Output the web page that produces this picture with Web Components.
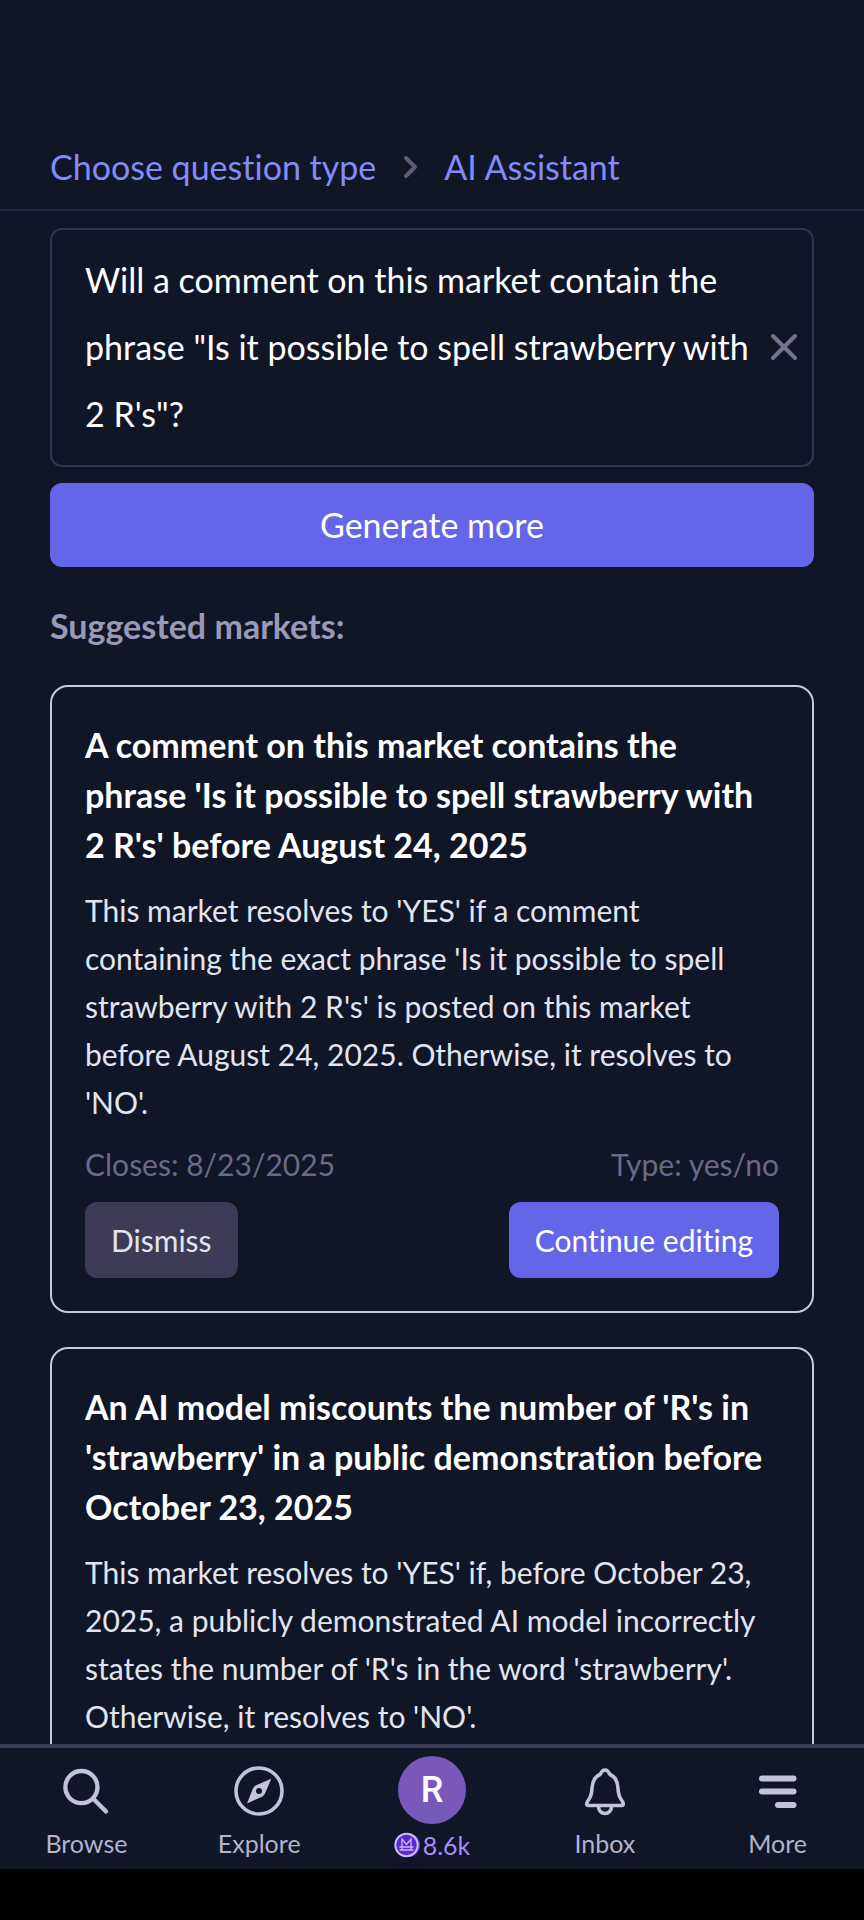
<!DOCTYPE html>
<html lang="en">
<head>
<meta charset="utf-8">
<meta name="viewport" content="width=device-width, initial-scale=1">
<title>AI Assistant</title>
<style>
  html, body { margin: 0; height: 100%; background: #000; }
  body { font-family: Lato, "Open Sans", sans-serif; font-variant-ligatures: none; color: #fff; }
</style>
</head>
<body>
<assistant-app>
  <bread-crumbs slot="header"></bread-crumbs>
  <prompt-form>Will a comment on this market contain the phrase "Is it possible to spell strawberry with 2 R's"?</prompt-form>
  <market-list heading="Suggested markets:">
    <market-card closes="8/23/2025" type="yes/no">
      <span slot="title">A comment on this market contains the phrase 'Is it possible to spell strawberry with 2&nbsp;R's' before August 24, 2025</span>
      This market resolves to 'YES' if a comment containing the exact phrase 'Is it possible to spell strawberry with 2 R's' is posted on this market before August 24, 2025. Otherwise, it resolves to 'NO'.
    </market-card>
    <market-card>
      <span slot="title">An AI model miscounts the number of 'R's in 'strawberry' in a public demonstration before October 23, 2025</span>
      This market resolves to 'YES' if, before October 23, 2025, a publicly demonstrated AI model incorrectly states the number of 'R's in the word 'strawberry'. Otherwise, it resolves to 'NO'.
    </market-card>
  </market-list>
  <bottom-nav slot="footer">
    <nav-item label="Browse">
      <svg width="50" height="50" viewBox="0 0 24 24" fill="none" stroke="#c4c2da" stroke-width="2.1" stroke-linecap="round"><circle cx="9.8" cy="10.6" r="7.7"/><path d="M15.400 16.100L21.600 22.300"/></svg>
    </nav-item>
    <nav-item label="Explore">
      <svg width="50" height="50" viewBox="0 0 50 50" overflow="visible"><circle cx="25" cy="26" r="23" fill="none" stroke="#c4c2da" stroke-width="3.600"/><path fill="#c4c2da" fill-rule="evenodd" d="M37.200 13.700L31.500 27.500Q30.500 30 28.500 31.500L13 38.500L18.500 24.500Q19.500 22 21.500 20.500ZM25 23a3 3 0 1 0 0 6a3 3 0 1 0 0-6Z"/></svg>
    </nav-item>
    <nav-item label="8.6k" accent>
      <user-avatar>R</user-avatar>
      <svg slot="coin" width="26" height="26" viewBox="0 0 26 26"><circle cx="14" cy="13" r="12" fill="#6d3be0"/><circle cx="12.500" cy="13" r="11.200" fill="#5a28cf" stroke="#c9b8fa" stroke-width="2"/><path d="M8 18V7l4.500 5.500L17 7V18M5.500 15h14M5.500 18h14" fill="none" stroke="#c9b8fa" stroke-width="1.300"/></svg>
    </nav-item>
    <nav-item label="Inbox">
      <svg width="50" height="50" viewBox="0 0 50 50" overflow="visible" fill="none" stroke="#c4c2da" stroke-width="3.600" stroke-linejoin="round"><path d="M8.500 40.500Q5.500 40.500 7.500 36.500C11 32 12 29 12 23C12.500 15.500 15.500 11.500 20 9.500Q22 5 25 5Q28 5 30 9.500C34.500 11.500 37.500 15.500 38 23C38 29 39 32 42.500 36.500Q44.500 40.500 41.500 40.500Z"/><path d="M18.500 41.500a6.500 7 0 0 0 13 0"/></svg>
    </nav-item>
    <nav-item label="More">
      <svg width="50" height="50" viewBox="0 0 50 50" fill="none" stroke="#c4c2da" stroke-width="6" stroke-linecap="round"><path d="M9 13.500H40.500M9 26.500H40.500M25 40H40.500"/></svg>
    </nav-item>
  </bottom-nav>
</assistant-app>

<script>
function define(name, html, setup) {
  const template = document.createElement('template');
  template.innerHTML = html;
  customElements.define(name, class extends HTMLElement {
    constructor() {
      super();
      this.attachShadow({ mode: 'open' }).append(template.content.cloneNode(true));
    }
    connectedCallback() { if (setup) setup(this, this.shadowRoot); }
  });
}

define('assistant-app', `
  <style>
    :host { display: flex; flex-direction: column; height: 100vh; box-sizing: border-box; padding-bottom: 51px; background: #000; }
    header, main { background: #111627; }
    main { flex: 1; min-height: 0; overflow: hidden; padding: 17px 50px 0; }
  </style>
  <header><slot name="header"></slot></header>
  <main><slot></slot></main>
  <footer><slot name="footer"></slot></footer>`);

define('bread-crumbs', `
  <style>
    :host { display: block; border-bottom: 2px solid #222541; padding: 125px 50px 0; }
    nav { display: flex; align-items: center; gap: 26px; height: 84px; font-size: 34px; line-height: 50px; }
    a { color: #818cf8; text-decoration: none; }
  </style>
  <nav aria-label="Breadcrumb">
    <a href="#type">Choose question type</a>
    <svg width="16" height="24" viewBox="0 0 16 24" fill="none" stroke="#5f5c7b" stroke-width="4" stroke-linecap="round" stroke-linejoin="round"><path d="M4 3l9 9-9 9"/></svg>
    <a href="#assistant">AI Assistant</a>
  </nav>`);

define('prompt-form', `
  <style>
    :host { display: block; }
    .box { display: flex; align-items: center; border: 2px solid #33334f; border-radius: 12px; padding: 16px 13px 18px 33px; }
    textarea { flex: 1; min-width: 0; height: 201px; margin: 0; padding: 0; border: 0; outline: 0; resize: none; overflow: hidden; background: none; color: #fff; font: inherit; font-variant-ligatures: none; font-size: 34px; line-height: 67px; }
    .clear { display: grid; padding: 0; border: 0; background: none; }
    .generate { display: block; width: 100%; height: 84px; margin-top: 16px; border: 0; border-radius: 12px; background: #6366e8; color: #fff; font: inherit; font-size: 34px; line-height: 50px; }
  </style>
  <div class="box">
    <textarea aria-label="Question"></textarea>
    <button class="clear" aria-label="Clear"><svg width="30" height="30" viewBox="0 0 30 30" fill="none" stroke="#75728f" stroke-width="4" stroke-linecap="round"><path d="M4 4l22 22M26 4L4 26"/></svg></button>
  </div>
  <button class="generate">Generate more</button>`,
  (host, root) => { root.querySelector('textarea').value = host.textContent.trim(); });

define('market-list', `
  <style>
    :host { display: flex; flex-direction: column; gap: 34px; margin-top: 34px; }
    h2 { margin: 0; color: #9b98b8; font-size: 34px; line-height: 50px; font-weight: 700; }
  </style>
  <h2></h2>
  <slot></slot>`,
  (host, root) => { root.querySelector('h2').textContent = host.getAttribute('heading'); });

define('market-card', `
  <style>
    :host { display: block; border: 2px solid #c8cad8; border-radius: 18px; padding: 33px; }
    h3 { margin: 0 0 16px; color: #fff; font-size: 34px; line-height: 50px; font-weight: 700; }
    p { margin: 0; color: #e2e4f0; font-size: 30px; line-height: 48px; }
    .row { display: flex; justify-content: space-between; }
    .meta { margin: 16px 0; color: #6b6985; font-size: 30px; line-height: 44px; }
    button { height: 76px; padding: 0 26px; border: 0; border-radius: 12px; background: #3d3b57; color: #e2e4f0; font: inherit; font-variant-ligatures: none; font-size: 30px; line-height: 44px; }
    .primary { background: #6366e8; color: #fff; }
  </style>
  <h3><slot name="title"></slot></h3>
  <p><slot></slot></p>
  <div class="details">
    <div class="row meta"><span class="closes"></span><span class="type"></span></div>
    <div class="row"><button>Dismiss</button><button class="primary">Continue editing</button></div>
  </div>`,
  (host, root) => {
    if (!host.hasAttribute('closes')) { root.querySelector('.details').remove(); return; }
    root.querySelector('.closes').textContent = 'Closes: ' + host.getAttribute('closes');
    root.querySelector('.type').textContent = 'Type: ' + host.getAttribute('type');
  });

define('user-avatar', `
  <style>
    :host { display: grid; place-items: center; width: 68px; height: 68px; border-radius: 50%; background: #7858b8; color: #fff; font: 500 36px/68px Roboto, sans-serif; }
  </style>
  <slot></slot>`);

define('bottom-nav', `
  <style>
    :host { display: block; border-top: 4px solid #3d3b57; background: #111627; }
    nav { display: grid; grid-template-columns: repeat(5, 1fr); }
  </style>
  <nav aria-label="Main"><slot></slot></nav>`);

define('nav-item', `
  <style>
    :host { display: block; }
    a { display: flex; flex-direction: column; align-items: center; height: 121px; color: #b4b2cc; text-decoration: none; }
    .icon { display: grid; place-items: center; height: 84px; }
    .label { display: flex; align-items: center; gap: 3px; font-size: 25px; line-height: 22px; }
    :host([accent]) a { color: #a78bfa; }
  </style>
  <a href="#"><span class="icon"><slot></slot></span><span class="label"><slot name="coin"></slot><span class="text"></span></span></a>`,
  (host, root) => { root.querySelector('.text').textContent = host.getAttribute('label'); });
</script>
</body>
</html>
